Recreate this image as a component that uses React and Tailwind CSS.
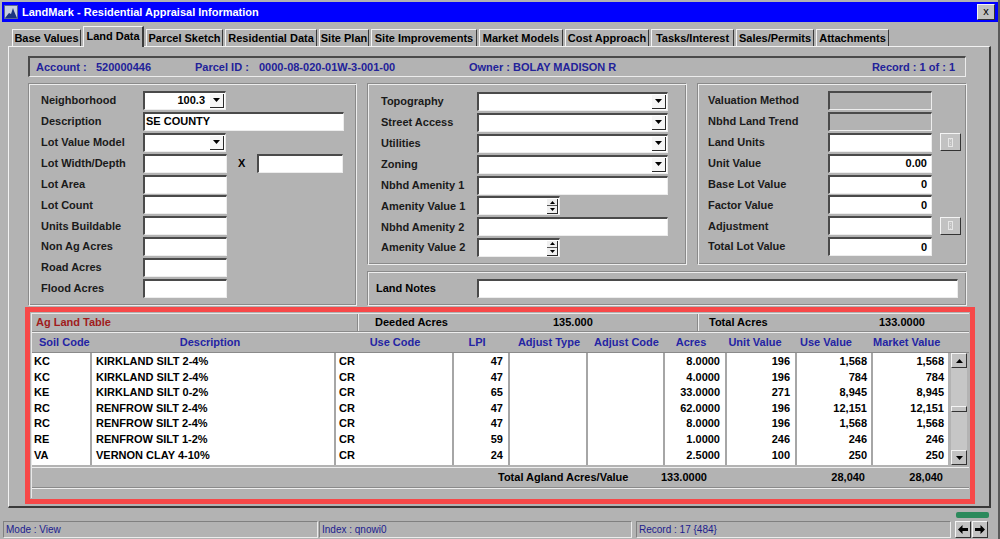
import React from "react";

const inp = "bg-white border-t-2 border-l-2 border-r border-b border-t-[#4a4a4a] border-l-[#4a4a4a] border-r-[#ededed] border-b-[#ededed]";
const inpGrey = "bg-[#b3b3b3] border-t-2 border-l-2 border-r border-b border-t-[#4a4a4a] border-l-[#4a4a4a] border-r-[#ededed] border-b-[#ededed]";
const etched = "border border-t-[#8a8a8a] border-l-[#8a8a8a] border-r-[#eeeeee] border-b-[#eeeeee] shadow-[inset_1px_1px_0_#eeeeee,inset_-1px_-1px_0_#8a8a8a]";
const raised = "bg-[#c2c2c2] border border-t-[#f4f4f4] border-l-[#f4f4f4] border-r-[#333333] border-b-[#333333]";
const thinSunken = "border border-t-[#808080] border-l-[#808080] border-r-[#ececec] border-b-[#ececec]";

function DropBtn() {
  return (
    <div className="w-[14px] h-[14px] mr-[1px] border-r border-b border-[#2a2a2a] bg-[#f6f6f6] flex items-center justify-center">
      <svg width="7" height="4" viewBox="0 0 7 4">
        <path d="M0 0h7L3.5 4z" fill="#000" />
      </svg>
    </div>
  );
}

function Select({ w, value }) {
  return (
    <div className={`${w} h-[19px] ${inp} flex items-center`}>
      <div className="flex-1 text-right pr-[5px] leading-none">{value}</div>
      <DropBtn />
    </div>
  );
}

function Input({ w, value, right, grey }) {
  return (
    <div className={`${w} h-[19px] ${grey ? inpGrey : inp} flex items-center px-[1px] leading-none ${right ? "justify-end pr-[4px]" : ""}`}>
      {value}
    </div>
  );
}

function Spinner({ w }) {
  return (
    <div className={`${w} h-[19px] ${inp} flex items-center justify-end`}>
      <div className="w-[11px] h-[15px] mr-[1px] border-r border-b border-[#2a2a2a] bg-[#f0f0f0] flex flex-col">
        <div className="flex-1 flex items-center justify-center border-b border-[#555]">
          <svg width="5" height="3" viewBox="0 0 5 3"><path d="M0 3h5L2.5 0z" fill="#000" /></svg>
        </div>
        <div className="flex-1 flex items-center justify-center">
          <svg width="5" height="3" viewBox="0 0 5 3"><path d="M0 0h5L2.5 3z" fill="#000" /></svg>
        </div>
      </div>
    </div>
  );
}

function MiniBtn() {
  return (
    <div className={`ml-[8px] w-[21px] h-[18px] ${raised} flex items-center justify-center`}>
      <div className="w-[5px] h-[9px] border border-[#e6e6e6] flex flex-col justify-around px-[1px]">
        <div className="h-[1px] bg-[#d8d8d8]" />
        <div className="h-[1px] bg-[#d8d8d8]" />
        <div className="h-[1px] bg-[#d8d8d8]" />
      </div>
    </div>
  );
}

function Row({ label, lw, children }) {
  return (
    <div className="flex items-center h-[20.9px]">
      <div className={`${lw} text-[#1a1a1a]`}>{label}</div>
      {children}
    </div>
  );
}

function Tab({ label, w, active }) {
  if (active)
    return (
      <div className={`${w} h-[21px] -mb-[1px] relative z-10 bg-[#b3b3b3] border-t border-l border-[#f4f4f4] border-r-2 border-r-[#3a3a3a] flex items-center justify-center pb-[2px]`}>
        {label}
      </div>
    );
  return (
    <div className={`${w} h-[17px] bg-[#b3b3b3] border-t border-l border-[#f4f4f4] border-r border-r-[#3a3a3a] flex items-center justify-center`}>
      {label}
    </div>
  );
}

const tabs = [
  ["Base Values", "w-[69px]"],
  ["Land Data", "w-[61px]", true],
  ["Parcel Sketch", "w-[77px]"],
  ["Residential Data", "w-[92px]"],
  ["Site Plan", "w-[50px]"],
  ["Site Improvements", "w-[106px]"],
  ["Market Models", "w-[84px]"],
  ["Cost Approach", "w-[84px]"],
  ["Tasks/Interest", "w-[83px]"],
  ["Sales/Permits", "w-[78px]"],
  ["Attachments", "w-[73px]"],
];

const cols = [
  { w: "w-[60px]", a: "text-left pl-[2px]" },
  { w: "w-[244px]", a: "text-left pl-[4px]" },
  { w: "w-[118px]", a: "text-left pl-[3px]" },
  { w: "w-[56px]", a: "text-right pr-[5px]" },
  { w: "w-[78px]", a: "text-right pr-[5px]" },
  { w: "w-[77px]", a: "text-right pr-[5px]" },
  { w: "w-[62px]", a: "text-right pr-[5px]" },
  { w: "w-[70px]", a: "text-right pr-[5px]" },
  { w: "w-[76px]", a: "text-right pr-[4px]" },
  { w: "w-[75px]", a: "text-right pr-[4px]" },
];

const heads = [
  ["Soil Code", "text-left pl-[7px]"],
  ["Description", "text-center pr-[8px]"],
  ["Use Code", "text-center"],
  ["LPI", "text-center pr-[10px]"],
  ["Adjust Type", "text-center"],
  ["Adjust Code", "text-center"],
  ["Acres", "text-center pr-[10px]"],
  ["Unit Value", "text-center pr-[14px]"],
  ["Use Value", "text-center pr-[18px]"],
  ["Market Value", "text-center pr-[12px]"],
];

const rows = [
  ["KC", "KIRKLAND SILT 2-4%", "CR", "47", "", "", "8.0000", "196", "1,568", "1,568"],
  ["KC", "KIRKLAND SILT 2-4%", "CR", "47", "", "", "4.0000", "196", "784", "784"],
  ["KE", "KIRKLAND SILT 0-2%", "CR", "65", "", "", "33.0000", "271", "8,945", "8,945"],
  ["RC", "RENFROW SILT 2-4%", "CR", "47", "", "", "62.0000", "196", "12,151", "12,151"],
  ["RC", "RENFROW SILT 2-4%", "CR", "47", "", "", "8.0000", "196", "1,568", "1,568"],
  ["RE", "RENFROW SILT 1-2%", "CR", "59", "", "", "1.0000", "246", "246", "246"],
  ["VA", "VERNON CLAY 4-10%", "CR", "24", "", "", "2.5000", "100", "250", "250"],
];

export default function App() {
  return (
    <div className="w-[1000px] h-[539px] bg-[#b3b3b3] font-['Liberation_Sans',Arial,Helvetica,sans-serif] text-[11px] font-bold text-black flex flex-col overflow-hidden pt-[2px] px-[2px] shadow-[inset_-2px_0_0_#5a5a5a]">
      {/* title bar */}
      <div className="h-[20px] bg-[#0000ff] flex items-center">
        <svg width="14" height="14" viewBox="0 0 14 14" className="ml-[2px]">
          <rect x="0" y="0" width="14" height="14" fill="#c8cede" />
          <rect x="0.5" y="0.5" width="13" height="13" fill="none" stroke="#5a6a90" />
          <path d="M1 13 L5 8 L7 9 L9 3 L10 6 L13 13 Z" fill="#1c3480" />
        </svg>
        <span className="ml-[4px] text-white">LandMark - Residential Appraisal Information</span>
        <div className={`ml-auto mr-[3px] w-[18px] h-[16px] ${raised} flex items-center justify-center font-normal text-[11px] leading-none pb-[2px]`}>x</div>
      </div>

      {/* tabs */}
      <div className="h-[24px] flex items-end pl-[10px] gap-[2px]">
        {tabs.map(([l, w, a]) => (
          <Tab key={l} label={l} w={w} active={a} />
        ))}
      </div>

      {/* tab panel */}
      <div className="ml-[6px] w-[983px] h-[462px] border-t border-l border-[#f2f2f2] border-r-2 border-b-2 border-r-[#3a3a3a] border-b-[#3a3a3a] flex flex-col">
        {/* header bar */}
        <div className="ml-[19px] mt-[9px] w-[938px] h-[21px] border-t-2 border-l-2 border-r border-b border-t-[#4a4a4a] border-l-[#4a4a4a] border-r-[#ececec] border-b-[#ececec] flex items-center text-[#22229a]">
          <span className="ml-[6px] w-[60px]">Account :</span>
          <span className="w-[99px]">520000446</span>
          <span className="w-[64px]">Parcel ID :</span>
          <span className="w-[210px]">0000-08-020-01W-3-001-00</span>
          <span>Owner : BOLAY MADISON R</span>
          <span className="ml-auto mr-[10px]">Record : 1 of : 1</span>
        </div>

        {/* field panels */}
        <div className="ml-[19px] mt-[6px] flex gap-[10px]">
          <div className={`w-[329px] h-[223px] ${etched} pl-[12px] pt-[6px]`}>
            <Row label="Neighborhood" lw="w-[102px]"><Select w="w-[83px]" value="100.3" /></Row>
            <Row label="Description" lw="w-[102px]"><Input w="w-[201px]" value="SE COUNTY" /></Row>
            <Row label="Lot Value Model" lw="w-[102px]"><Select w="w-[83px]" /></Row>
            <Row label="Lot Width/Depth" lw="w-[102px]">
              <Input w="w-[84px]" />
              <span className="ml-[11px] w-[19px]">X</span>
              <Input w="w-[86px]" />
            </Row>
            <Row label="Lot Area" lw="w-[102px]"><Input w="w-[84px]" /></Row>
            <Row label="Lot Count" lw="w-[102px]"><Input w="w-[84px]" /></Row>
            <Row label="Units Buildable" lw="w-[102px]"><Input w="w-[84px]" /></Row>
            <Row label="Non Ag Acres" lw="w-[102px]"><Input w="w-[84px]" /></Row>
            <Row label="Road Acres" lw="w-[102px]"><Input w="w-[84px]" /></Row>
            <Row label="Flood Acres" lw="w-[102px]"><Input w="w-[84px]" /></Row>
          </div>

          <div className="w-[600px] flex flex-col gap-[6px]">
            <div className="flex gap-[10px]">
              <div className={`w-[320px] h-[182px] ${etched} pl-[13px] pt-[7px]`}>
                <Row label="Topography" lw="w-[96px]"><Select w="w-[191px]" /></Row>
                <Row label="Street Access" lw="w-[96px]"><Select w="w-[191px]" /></Row>
                <Row label="Utilities" lw="w-[96px]"><Select w="w-[191px]" /></Row>
                <Row label="Zoning" lw="w-[96px]"><Select w="w-[191px]" /></Row>
                <Row label="Nbhd Amenity 1" lw="w-[96px]"><Input w="w-[191px]" /></Row>
                <Row label="Amenity Value 1" lw="w-[96px]"><Spinner w="w-[83px]" /></Row>
                <Row label="Nbhd Amenity 2" lw="w-[96px]"><Input w="w-[191px]" /></Row>
                <Row label="Amenity Value 2" lw="w-[96px]"><Spinner w="w-[83px]" /></Row>
              </div>
              <div className={`w-[270px] h-[182px] ${etched} pl-[10px] pt-[6px]`}>
                <Row label="Valuation Method" lw="w-[120px]"><Input w="w-[104px]" grey /></Row>
                <Row label="Nbhd Land Trend" lw="w-[120px]"><Input w="w-[104px]" grey /></Row>
                <Row label="Land Units" lw="w-[120px]"><Input w="w-[104px]" /><MiniBtn /></Row>
                <Row label="Unit Value" lw="w-[120px]"><Input w="w-[104px]" value="0.00" right /></Row>
                <Row label="Base Lot Value" lw="w-[120px]"><Input w="w-[104px]" value="0" right /></Row>
                <Row label="Factor Value" lw="w-[120px]"><Input w="w-[104px]" value="0" right /></Row>
                <Row label="Adjustment" lw="w-[120px]"><Input w="w-[104px]" /><MiniBtn /></Row>
                <Row label="Total Lot Value" lw="w-[120px]"><Input w="w-[104px]" value="0" right /></Row>
              </div>
            </div>
            <div className={`w-[600px] h-[35px] ${etched} pl-[8px] flex items-center`}>
              <span className="w-[101px]">Land Notes</span>
              <Input w="w-[481px]" />
            </div>
          </div>
        </div>

        {/* ag land table, highlighted */}
        <div className="ml-[16px] mt-[1px] w-[950px] h-[197px] border-[5px] border-[#f74848] p-[1px]">
          <div className="h-full border-l border-t border-[#e8e8e8] flex flex-col">
            <div className="h-[18px] flex items-center border-b border-[#8a8a8a] shadow-[0_1px_0_#eeeeee]">
              <div className="w-[326px] h-full flex items-center pl-[4px] text-[#a01c1c] font-bold border-r border-[#8a8a8a] shadow-[1px_0_0_#eeeeee]">
                Ag Land Table
              </div>
              <div className="w-[340px] h-full flex items-center border-r border-[#8a8a8a] shadow-[1px_0_0_#eeeeee]">
                <span className="ml-[17px] w-[178px]">Deeded Acres</span>
                <span>135.000</span>
              </div>
              <div className="flex-1 h-full flex items-center">
                <span className="ml-[11px] w-[170px]">Total Acres</span>
                <span>133.0000</span>
              </div>
            </div>

            <div className="h-[20px] flex items-center text-[#2424a4]">
              {heads.map(([h, a], i) => (
                <div key={h} className={`${cols[i].w} shrink-0 whitespace-nowrap ${a}`}>{h}</div>
              ))}
            </div>

            <div className="h-[113px] flex border-t border-[#8a8a8a]">
              <div className="w-[916px] h-full bg-white flex">
                {cols.map((c, ci) => (
                  <div key={ci} className={`${c.w} h-full pt-[1px] ${ci < 9 ? "border-r-2 border-[#a6a6a6]" : ""}`}>
                    {rows.map((r, ri) => (
                      <div key={ri} className={`h-[15.6px] leading-[15.6px] whitespace-nowrap ${c.a}`}>{r[ci]}</div>
                    ))}
                  </div>
                ))}
              </div>
              <div className="ml-[3px] w-[16px] h-full flex flex-col bg-[#c6c6c6]">
                <div className={`h-[15px] ${raised} flex items-center justify-center`}>
                  <svg width="7" height="4" viewBox="0 0 7 4"><path d="M0 4h7L3.5 0z" fill="#000" /></svg>
                </div>
                <div className="flex-1 flex flex-col">
                  <div className="h-[38px]" />
                  <div className={`h-[6px] ${raised}`} />
                </div>
                <div className={`h-[15px] ${raised} flex items-center justify-center`}>
                  <svg width="7" height="4" viewBox="0 0 7 4"><path d="M0 0h7L3.5 4z" fill="#000" /></svg>
                </div>
              </div>
            </div>

            <div className="mt-[2px] h-[21px] flex items-center border-t border-[#eeeeee] border-b border-b-[#8a8a8a]">
              <span className="w-[466px]" />
              <span className="w-[163px]">Total Agland Acres/Value</span>
              <span className="w-[100px]">133.0000</span>
              <span className="w-[104px] text-right">28,040</span>
              <span className="w-[78px] text-right">28,040</span>
            </div>
            <div className="flex-1 border-t border-[#eeeeee]" />
          </div>
        </div>
      </div>

      {/* green indicator */}
      <div className="h-[13px] flex">
        <div className="ml-[954px] mt-[4px] w-[33px] h-[6px] rounded-[2px] bg-[#2c8a5c]" />
      </div>

      {/* status bar */}
      <div className="h-[17px] flex text-[10px] font-normal text-[#20208e]">
        <div className={`ml-[1px] w-[315px] ${thinSunken} pl-[2px] flex items-center`}>Mode : View</div>
        <div className={`ml-[1px] w-[313px] ${thinSunken} pl-[2px] flex items-center`}>Index : qnowi0</div>
        <div className={`ml-[4px] w-[315px] ${thinSunken} pl-[2px] flex items-center`}>Record : 17 {"{484}"}</div>
        <div className={`ml-[4px] w-[16px] ${raised} flex items-center justify-center`}>
          <svg width="10" height="9" viewBox="0 0 10 9"><path d="M0 4.5L4.5 0V3H10V6H4.5V9Z" fill="#000" /></svg>
        </div>
        <div className={`ml-[1px] w-[16px] ${raised} flex items-center justify-center`}>
          <svg width="10" height="9" viewBox="0 0 10 9"><path d="M10 4.5L5.5 0V3H0V6H5.5V9Z" fill="#000" /></svg>
        </div>
      </div>
    </div>
  );
}
